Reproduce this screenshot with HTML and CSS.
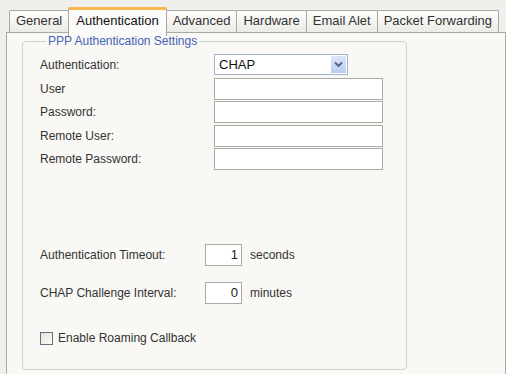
FILE: index.html
```html
<!DOCTYPE html>
<html>
<head>
    <title>PPP Authentication</title>
    <link rel="stylesheet" href="styles.css">
</head>
<body>
    <div class="dialog">
        <div class="tabs">
            <div class="tab">General</div>
            <div class="tab active">Authentication</div>
            <div class="tab">Advanced</div>
            <div class="tab">Hardware</div>
            <div class="tab">Email Alet</div>
            <div class="tab">Packet Forwarding</div>
        </div>
        <div class="panel">
            <fieldset class="group">
                <legend>PPP Authentication Settings</legend>
                <div class="form-grid">
                    <label>Authentication:</label>
                    <div class="select">
                        <span>CHAP</span>
                        <span class="select-arrow">
                            <svg width="9" height="7" viewBox="0 0 9 7"><path d="M1 1.5 L4.5 5 L8 1.5" fill="none" stroke="#4d6185" stroke-width="1.8"/></svg>
                        </span>
                    </div>
                    <label>User</label>
                    <div class="text-box"></div>
                    <label>Password:</label>
                    <div class="text-box"></div>
                    <label>Remote User:</label>
                    <div class="text-box"></div>
                    <label>Remote Password:</label>
                    <div class="text-box"></div>
                </div>
                <div class="timing">
                    <div class="timing-row">
                        <label>Authentication Timeout:</label>
                        <div class="num-box">1</div>
                        <span class="unit">seconds</span>
                    </div>
                    <div class="timing-row">
                        <label>CHAP Challenge Interval:</label>
                        <div class="num-box">0</div>
                        <span class="unit">minutes</span>
                    </div>
                </div>
                <div class="check-row">
                    <span class="check"></span>
                    <span>Enable Roaming Callback</span>
                </div>
            </fieldset>
        </div>
    </div>
</body>
</html>
```

FILE: styles.css
```css
body {
    margin: 0;
    background-color: #f0efeb;
    font-family: "Liberation Sans", Arial, sans-serif;
    font-size: 12px;
    color: #222;
}

.dialog {
    width: 506px;
    height: 374px;
    overflow: hidden;
}

.tabs {
    display: flex;
    padding: 10px 0 0 9px;
    height: 22px;
}

.tab {
    height: 21px;
    line-height: 20px;
    padding: 0 6px;
    border: 1px solid #a8a9a4;
    border-bottom: none;
    border-radius: 2px 2px 0 0;
    background: linear-gradient(#fdfdfc, #ecebe5);
    color: #333;
    font-size: 13px;
    margin-right: -1px;
    white-space: nowrap;
}

.tab.active {
    position: relative;
    z-index: 1;
    height: 26px;
    margin-top: -3px;
    line-height: 22px;
    padding: 0 7px;
    border-top: 3px solid #f7b94a;
    background: #fbfbf9;
    color: #111;
    font-size: 13px;
}

.panel {
    margin-left: 6px;
    height: 360px;
    border: 1px solid #a8a9a4;
    background-color: #f9f8f5;
    padding: 1px 0 0 15px;
}

.group {
    width: 366px;
    height: 330px;
    margin: 0;
    padding: 4px 0 0 17px;
    border: 1px solid #d3d2c7;
    border-radius: 4px;
    box-sizing: content-box;
}

.group legend {
    padding: 0 2px;
    margin-left: 6px;
    color: #4363b4;
    font-size: 12px;
}

.form-grid {
    display: grid;
    grid-template-columns: 174px 170px;
    grid-template-rows: 25px repeat(4, 23.5px);
    align-items: center;
}

.form-grid label {
    color: #333;
}

.select {
    width: 128px;
    height: 19px;
    border: 1px solid #a4b3c6;
    background: #fff;
    display: flex;
    align-items: center;
    justify-content: space-between;
    padding-left: 4px;
    box-sizing: content-box;
    font-size: 13px;
    color: #111;
}

.select-arrow {
    width: 15px;
    height: 17px;
    margin-right: 1px;
    background: linear-gradient(#dce6f8, #b9cbef);
    display: flex;
    align-items: center;
    justify-content: center;
}

.text-box {
    width: 167px;
    height: 20px;
    border: 1px solid #a9aba5;
    background: #fff;
}

.timing {
    margin-top: 73px;
    display: flex;
    flex-direction: column;
    gap: 16px;
}

.timing-row {
    display: flex;
    align-items: center;
}

.timing-row label {
    width: 165px;
    color: #333;
}

.num-box {
    width: 32px;
    height: 20px;
    line-height: 20px;
    border: 1px solid #a9aba5;
    background: #fff;
    text-align: right;
    padding-right: 3px;
    font-size: 13px;
}

.unit {
    margin-left: 8px;
    color: #333;
}

.check-row {
    display: flex;
    align-items: center;
    gap: 5px;
    margin-top: 27px;
    color: #333;
}

.check {
    width: 11px;
    height: 11px;
    border: 1px solid #5f6f86;
    background: linear-gradient(135deg, #e4e3dc, #fbfbf9);
}
```
